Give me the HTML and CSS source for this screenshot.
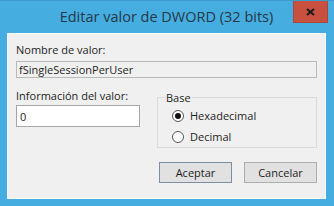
FILE: index.html
```html
<!DOCTYPE html>
<html lang="es">
<head>
  <meta charset="UTF-8">
  <title>Editar valor de DWORD (32 bits)</title>
  <link rel="stylesheet" href="styles.css">
</head>
<body>
  <div class="window">
    <div class="titlebar">
      <span class="title">Editar valor de DWORD (32 bits)</span>
      <button class="close" title="Cerrar">
        <svg width="9" height="8" viewBox="0 0 9 8">
          <path d="M1 1 L8 7 M8 1 L1 7" stroke="#1a1a1a" stroke-width="2"/>
        </svg>
      </button>
    </div>

    <div class="client">
      <label class="label" for="valueName">Nombre de valor:</label>
      <input class="field readonly" id="valueName" type="text" value="fSingleSessionPerUser" readonly>

      <div class="row">
        <div class="col-data">
          <label class="label" for="valueData">Información del valor:</label>
          <input class="field data" id="valueData" type="text" value="0">
        </div>

        <fieldset class="base">
          <legend>Base</legend>
          <label class="radio">
            <span class="dot checked"></span>
            Hexadecimal
          </label>
          <label class="radio">
            <span class="dot"></span>
            Decimal
          </label>
        </fieldset>
      </div>

      <div class="buttons">
        <button class="btn default">Aceptar</button>
        <button class="btn">Cancelar</button>
      </div>
    </div>
  </div>
</body>
</html>
```

FILE: styles.css
```css
html, body {
  margin: 0;
  padding: 0;
}
body {
  font-family: "Open Sans", "Noto Sans", sans-serif;
  font-size: 11px;
  color: #1e1e1e;
  background: #45ade0;
}
.window {
  width: 334px;
  height: 206px;
  box-sizing: border-box;
  background: #45ade0;
  border-top: 1px solid #3a9bcc;
  padding: 0 8px 7px 7px;
  display: flex;
  flex-direction: column;
}
.titlebar {
  height: 32px;
  display: flex;
  align-items: flex-start;
  justify-content: center;
  position: relative;
}
.title {
  font-size: 14.5px;
  color: #253847;
  margin-top: 6px;
}
.close {
  position: absolute;
  right: -2px;
  top: 0;
  width: 35px;
  height: 22px;
  border: 1px solid #a9483a;
  border-top: none;
  background: #c7503f;
  padding: 0;
  display: flex;
  align-items: center;
  justify-content: center;
}
.client {
  flex: 1;
  background: #f0f0f0;
  border: 1px solid #fbfbfb;
  padding: 8px 8px 0 8px;
  display: flex;
  flex-direction: column;
}
.label {
  display: block;
  line-height: 15px;
  color: #1e1e1e;
}
.field {
  font-family: inherit;
  font-size: 11px;
  color: #1e1e1e;
  box-sizing: border-box;
  margin: 0;
  outline: none;
}
.readonly {
  margin-top: 4px;
  width: 301px;
  height: 17px;
  border: 1px solid #b9b9b9;
  background: #f0f0f0;
  padding: 0 2px;
}
.row {
  display: flex;
  gap: 17px;
  margin-top: 10px;
}
.col-data {
  display: flex;
  flex-direction: column;
}
.data {
  margin-top: 2px;
  width: 124px;
  height: 22px;
  border: 1px solid #a6a6a6;
  background: #fff;
  padding: 0 3px;
}
.base {
  margin: 2px 0 0 0;
  width: 161px;
  height: 58px;
  box-sizing: border-box;
  border: 1px solid #dcdcdc;
  padding: 3px 0 0 14px;
  display: flex;
  flex-direction: column;
  gap: 6px;
}
.base legend {
  padding: 0 1px;
  margin-left: -7px;
}
.radio {
  display: flex;
  align-items: center;
  gap: 6px;
  line-height: 15px;
}
.dot {
  width: 10px;
  height: 10px;
  border: 1px solid #555;
  border-radius: 50%;
  background: #fff;
  display: flex;
  align-items: center;
  justify-content: center;
}
.dot.checked::after {
  content: "";
  width: 6px;
  height: 6px;
  border-radius: 50%;
  background: #111;
}
.buttons {
  display: flex;
  justify-content: flex-end;
  gap: 12px;
  margin-top: 14px;
}
.btn {
  font-family: inherit;
  font-size: 11px;
  color: #1e1e1e;
  width: 73px;
  height: 21px;
  padding: 0;
  border: 1px solid #adadad;
  background: #e1e1e1;
}
.btn.default {
  border-color: #7d8fa3;
}
```
